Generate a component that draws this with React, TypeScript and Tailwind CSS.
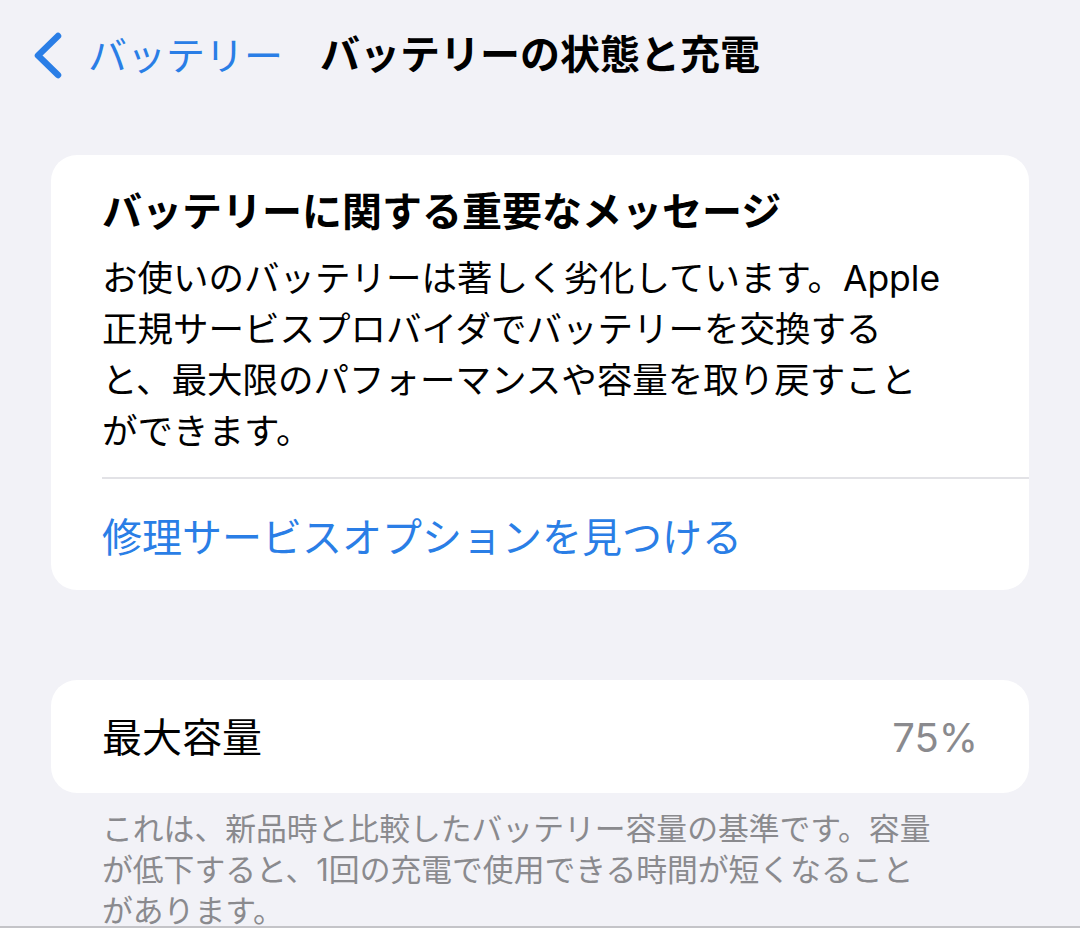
import React from "react";

export default function App() {
  return (
    <div className="w-[1080px] h-[928px] bg-[#f2f2f7] overflow-hidden flex flex-col [font-family:Inter,'Noto_Sans_CJK_JP',sans-serif] text-black">
      <div className="flex-1 overflow-hidden flex flex-col">
        {/* Nav bar */}
        <div className="grid grid-cols-[1fr_auto_1fr] items-center h-[110px] shrink-0">
          <div className="flex items-center pl-[32px] gap-[22px]">
            <svg width="34" height="54" viewBox="0 0 34 54" fill="none">
              <polyline
                points="26,8 6,27.5 26,47"
                stroke="#2a7ee6"
                strokeWidth="6.5"
                strokeLinecap="round"
                strokeLinejoin="round"
              />
            </svg>
            <span className="text-[39px] leading-none text-[#2a7ee6]">バッテリー</span>
          </div>
          <span className="text-[40px] leading-none font-bold whitespace-nowrap">
            バッテリーの状態と充電
          </span>
          <div />
        </div>

        {/* Message card */}
        <div className="mt-[45px] mx-[51px] rounded-[26px] bg-white shrink-0">
          <div className="pt-[33px] pb-[20px] px-[51px]">
            <div className="text-[40px] leading-[48px] font-bold whitespace-nowrap">
              バッテリーに関する重要なメッセージ
            </div>
            <div className="mt-[17px] text-[35.5px] leading-[51px] whitespace-nowrap">
              <div>お使いのバッテリーは著しく劣化しています。Apple</div>
              <div>正規サービスプロバイダでバッテリーを交換する</div>
              <div>と、最大限のパフォーマンスや容量を取り戻すこと</div>
              <div>ができます。</div>
            </div>
          </div>
          <div className="pl-[51px]">
            <div className="h-[2px] bg-[#e2e2e6]" />
          </div>
          <div className="h-[111px] flex items-center pt-[6px] pl-[51px] text-[40px] leading-none text-[#2a7ee6] whitespace-nowrap">
            修理サービスオプションを見つける
          </div>
        </div>

        {/* Max capacity card */}
        <div className="mt-[90px] mx-[51px] h-[113px] rounded-[26px] bg-white flex items-center justify-between px-[51px] pt-[2px] shrink-0">
          <span className="text-[40px] leading-none">最大容量</span>
          <span className="text-[40px] leading-none text-[#8a8a8e]">75%</span>
        </div>

        {/* Footer */}
        <div className="mt-[15px] pl-[102px] text-[30.8px] leading-[41px] text-[#8a8a8e] whitespace-nowrap shrink-0">
          <div>これは、新品時と比較したバッテリー容量の基準です。容量</div>
          <div>が低下すると、1回の充電で使用できる時間が短くなること</div>
          <div>があります。</div>
        </div>
      </div>
      <div className="h-[2px] bg-[#c4c4c8] shrink-0" />
    </div>
  );
}
